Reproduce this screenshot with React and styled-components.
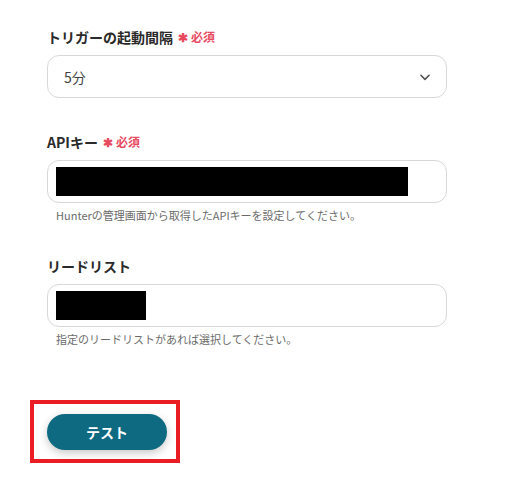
import React from "react";
import styled, { createGlobalStyle } from "styled-components";

const GlobalStyle = createGlobalStyle`
  body {
    margin: 0;
    background: #fff;
    font-family: "Noto Sans CJK JP", "Noto Sans", sans-serif;
  }
`;

const Page = styled.div`
  width: 514px;
  height: 484px;
  box-sizing: border-box;
  padding: 27px 0 0 47px;
`;

const Field = styled.div`
  width: 400px;
  margin-bottom: ${props => props.$gap ?? 33}px;
`;

const Label = styled.div`
  font-size: 14px;
  line-height: 20px;
  font-weight: 700;
  color: #2a2a2a;
  margin-bottom: 8px;
  display: flex;
  align-items: center;
`;

const Required = styled.span`
  color: #e84a5f;
  font-size: 12px;
  font-weight: 700;
  margin-left: 5px;
  display: flex;
  align-items: center;

  .star {
    font-size: 12px;
    margin-right: 3px;
  }
`;

const Box = styled.div`
  height: 43px;
  box-sizing: border-box;
  border: 1px solid #d6d8db;
  border-radius: 12px;
  display: flex;
  align-items: center;
  justify-content: space-between;
  padding: 0 14px 0 ${props => (props.$select ? 16 : 8)}px;
  color: #444;
  font-size: 14px;
`;

const Masked = styled.div`
  width: ${props => props.$w}px;
  height: 29px;
  background: #000;
`;

const Help = styled.div`
  font-size: 11px;
  line-height: 16px;
  color: #6b6b6b;
  margin: 4px 0 0 9px;
`;

const Highlight = styled.div`
  display: inline-block;
  margin: 53px 0 0 -17px;
  border: 4px solid #ea1c24;
  padding: 10px 9px 9px 13px;
`;

const TestButton = styled.button`
  width: 120px;
  height: 36px;
  border: none;
  border-radius: 18px;
  background: #0d6a81;
  color: #fff;
  font-family: inherit;
  font-size: 14px;
  font-weight: 700;
  box-shadow: 0 3px 8px rgba(0, 0, 0, 0.22);
  display: block;
`;

const Chevron = () => (
  <svg width="14" height="14" viewBox="0 0 24 24" fill="none">
    <path
      d="M5 9l7 7 7-7"
      stroke="#555"
      strokeWidth="2.8"
      strokeLinecap="round"
      strokeLinejoin="round"
    />
  </svg>
);

export default function App() {
  return (
    <Page>
      <GlobalStyle />
      <Field $gap={34}>
        <Label>
          トリガーの起動間隔
          <Required>
            <span className="star">✱</span>必須
          </Required>
        </Label>
        <Box $select>
          <span>5分</span>
          <Chevron />
        </Box>
      </Field>

      <Field>
        <Label>
          APIキー
          <Required>
            <span className="star">✱</span>必須
          </Required>
        </Label>
        <Box>
          <Masked $w={352} />
        </Box>
        <Help>Hunterの管理画面から取得したAPIキーを設定してください。</Help>
      </Field>

      <Field $gap={0}>
        <Label>リードリスト</Label>
        <Box>
          <Masked $w={90} />
        </Box>
        <Help>指定のリードリストがあれば選択してください。</Help>
      </Field>

      <Highlight>
        <TestButton>テスト</TestButton>
      </Highlight>
    </Page>
  );
}
